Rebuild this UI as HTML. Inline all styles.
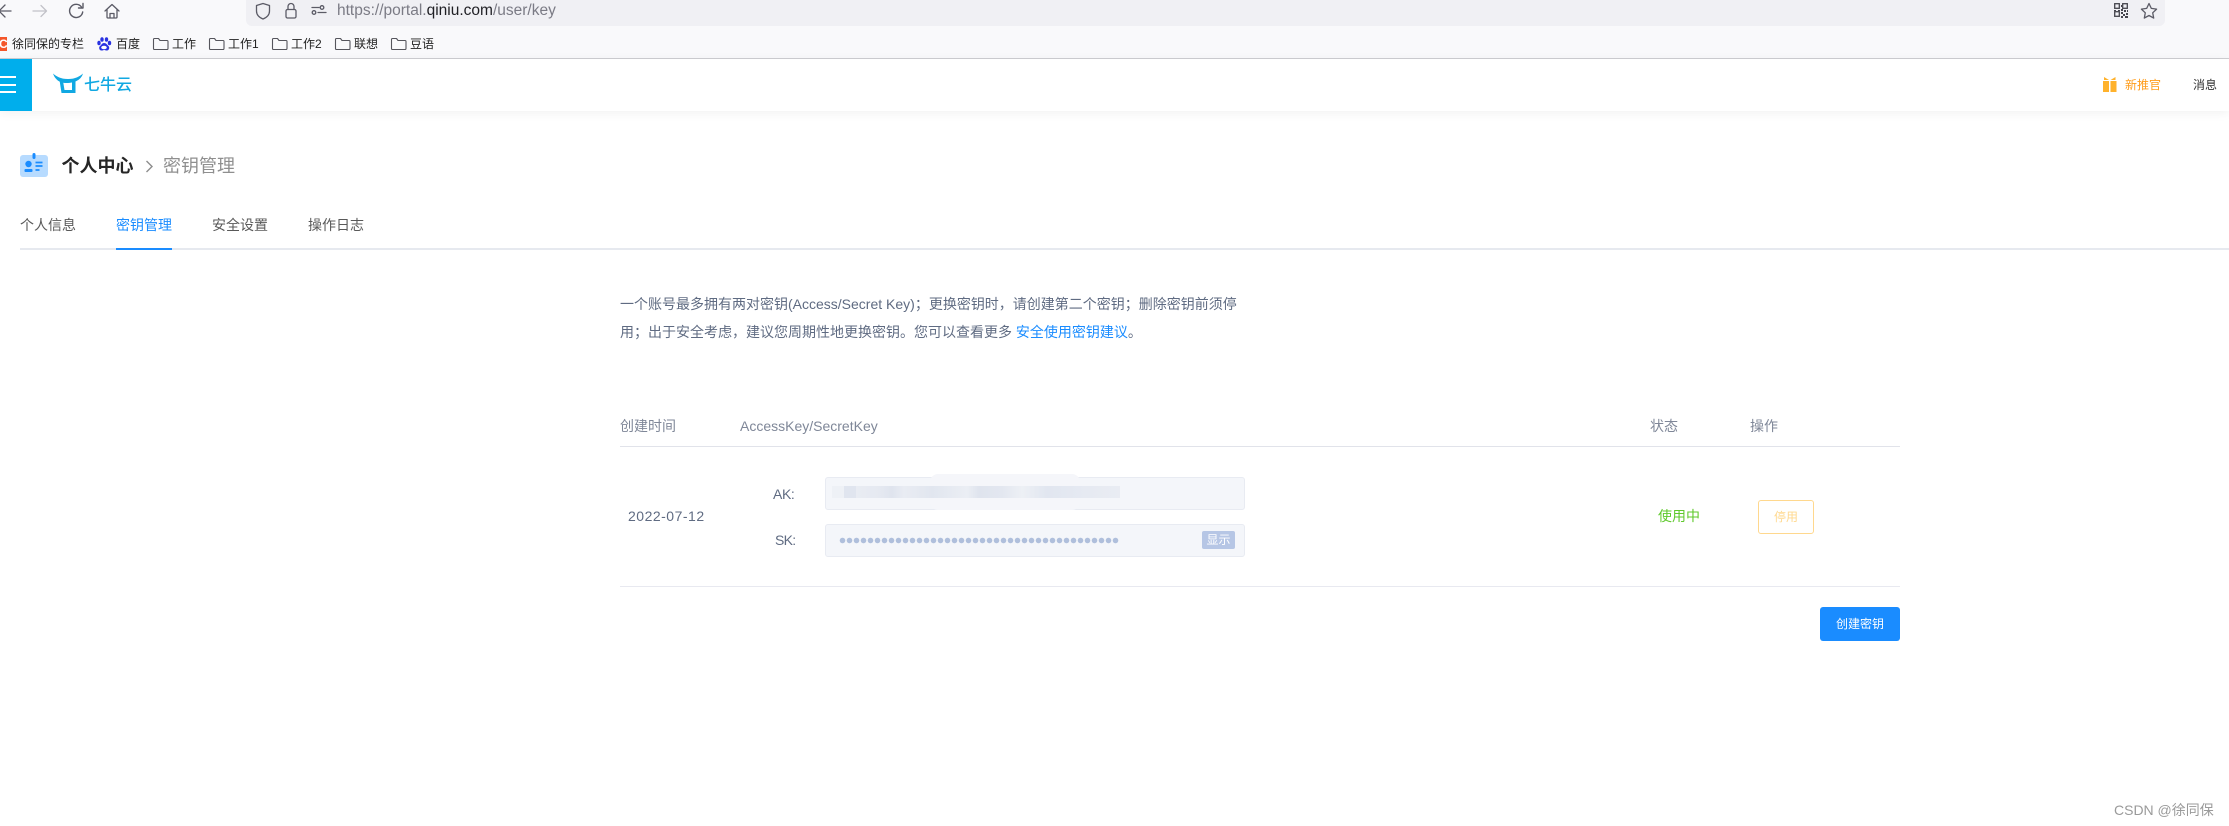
<!DOCTYPE html>
<html lang="zh">
<head>
<meta charset="utf-8">
<title>密钥管理</title>
<style>
html,body{margin:0;padding:0;background:#fff}
body{position:relative;width:2229px;height:826px;overflow:hidden;font-family:"Liberation Sans","Noto Sans CJK SC",sans-serif;color:#333}
.a{position:absolute;white-space:nowrap}
svg{position:absolute;overflow:visible}
.t{font-size:14px;line-height:20px;color:#5f6b82}
.bm{font-size:12px;line-height:16px;color:#222;top:36px}
</style>
</head>
<body>
<!-- browser chrome -->
<div class="a" style="left:0;top:0;width:2229px;height:58px;background:#f9f9fb;border-bottom:1px solid #cfcfd3"></div>
<div class="a" style="left:246px;top:0;width:1919px;height:26px;background:#f0f0f4;border-radius:0 0 6px 6px"></div>

<svg style="left:0;top:0" width="180" height="24" fill="none" stroke-linecap="round" stroke-linejoin="round">
  <path d="M11 11H-2M5 5l-6 6 6 6" stroke="#5b5b66" stroke-width="1.300"/>
  <path d="M33 11h13M41 5.500l5.500 5.500-5.500 5.500" stroke="#c2c2c8" stroke-width="1.300"/>
  <path d="M81.500 7a6.600 6.600 0 1 0 1.200 5" stroke="#5b5b66" stroke-width="1.400"/>
  <path d="M83 3.500v4.500h-4.500" stroke="#5b5b66" stroke-width="1.400"/>
  <path d="M105 11l7-6.500 7 6.500M107 9.500v7.500a1 1 0 0 0 1 1h8a1 1 0 0 0 1-1V9.500M110 18v-4.500h4V18" stroke="#5b5b66" stroke-width="1.300"/>
</svg>
<svg style="left:255px;top:0" width="75" height="24" fill="none" stroke="#5b5b66" stroke-width="1.300" stroke-linejoin="round" stroke-linecap="round">
  <path d="M8 3.500l6.500 2v5.500c0 3.800-2.800 6.500-6.500 8-3.700-1.500-6.500-4.200-6.500-8V5.500z"/>
  <rect x="31" y="9.500" width="10" height="8.500" rx="1.500"/>
  <path d="M33 9.500V6.500a3 3 0 0 1 6 0v3"/>
  <circle cx="59" cy="12.500" r="1.800"/><circle cx="67" cy="7.500" r="1.800"/>
  <path d="M57 7.500h7M63 12.500h8"/>
</svg>
<div class="a" style="left:337px;top:1px;font-size:15.500px;line-height:20px;color:#7b7b85">https://portal.<span style="color:#1f1f24">qiniu.com</span>/user/key</div>
<svg style="left:2112px;top:2px" width="50" height="20" fill="none">
  <g stroke="#45454d" stroke-width="1.300"><rect x="2.700" y="1.700" width="4.600" height="4.600"/><rect x="10.700" y="1.700" width="4.600" height="4.600"/><rect x="2.700" y="9.700" width="4.600" height="4.600"/></g>
  <path d="M2 8h2v1H2zM6 8h2v1H6zM9 3h1v2H9zM9 7h2v2H9zM12 8h2v2h-2zM15 8h1v2h-1zM9 10h2v2H9zM11 12h2v2h-2zM14 11h2v2h-2zM9 14h2v2H9zM13 14h3v2h-3z" fill="#45454d"/>
  <path d="M37 1.500l2.300 4.900 5.300.7-3.900 3.700 1 5.300-4.700-2.600-4.700 2.600 1-5.300-3.900-3.700 5.300-.7z" stroke="#5b5b66" stroke-width="1.300" stroke-linejoin="round"/>
</svg>

<!-- bookmarks -->
<div class="a" style="left:0;top:37px;width:7px;height:14px;background:#f4562a;overflow:hidden"><span class="a" style="left:-1px;top:0;color:#fff;font:bold 12px/14px 'Liberation Sans',sans-serif">C</span></div>
<div class="a bm" style="left:12px">徐同保的专栏</div>
<svg style="left:96px;top:36px" width="16" height="16" fill="#2932e1">
  <ellipse cx="3" cy="7" rx="1.700" ry="2.300"/><ellipse cx="6" cy="3.500" rx="1.700" ry="2.300"/><ellipse cx="10.500" cy="3.500" rx="1.700" ry="2.300"/><ellipse cx="13.500" cy="7" rx="1.700" ry="2.300"/>
  <path d="M8 7c-2 0-2.500 2-4 3s-1 4.500 1.500 4.500 1.500-.5 2.500-.5 1 .5 3 .5 3-3 1.500-4.500S10 7 8 7z"/>
  <ellipse cx="8" cy="11.500" rx="2.800" ry="1.800" fill="#fff"/>
</svg>
<div class="a bm" style="left:116px">百度</div>
<svg style="left:0;top:36px" width="420" height="16" fill="none" stroke="#55555c" stroke-width="1.100" stroke-linejoin="round">
  <path d="M153.500 3.500a1 1 0 0 1 1-1h4l1.500 2h7a1 1 0 0 1 1 1v7a1 1 0 0 1-1 1h-12.500a1 1 0 0 1-1-1z"/>
  <path d="M209.500 3.500a1 1 0 0 1 1-1h4l1.500 2h7a1 1 0 0 1 1 1v7a1 1 0 0 1-1 1h-12.500a1 1 0 0 1-1-1z"/>
  <path d="M272.500 3.500a1 1 0 0 1 1-1h4l1.500 2h7a1 1 0 0 1 1 1v7a1 1 0 0 1-1 1h-12.500a1 1 0 0 1-1-1z"/>
  <path d="M335.500 3.500a1 1 0 0 1 1-1h4l1.500 2h7a1 1 0 0 1 1 1v7a1 1 0 0 1-1 1h-12.500a1 1 0 0 1-1-1z"/>
  <path d="M391.500 3.500a1 1 0 0 1 1-1h4l1.500 2h7a1 1 0 0 1 1 1v7a1 1 0 0 1-1 1h-12.500a1 1 0 0 1-1-1z"/>
</svg>
<div class="a bm" style="left:172px">工作</div>
<div class="a bm" style="left:228px">工作1</div>
<div class="a bm" style="left:291px">工作2</div>
<div class="a bm" style="left:354px">联想</div>
<div class="a bm" style="left:410px">豆语</div>

<!-- top nav -->
<div class="a" style="left:0;top:59px;width:2229px;height:52px;background:#fff;box-shadow:0 2px 10px rgba(0,0,0,.06)"></div>
<div class="a" style="left:0;top:59px;width:32px;height:52px;background:#00aeec"></div>
<div class="a" style="left:0;top:76px;width:16px;height:2px;background:#fff"></div>
<div class="a" style="left:0;top:84px;width:16px;height:2px;background:#fff"></div>
<div class="a" style="left:0;top:91px;width:16px;height:2px;background:#fff"></div>
<svg style="left:50px;top:70px" width="40" height="28" fill="#11a8e2">
  <path d="M3 3.500c3.500 3 7.500 5.500 15 5.500s11.500-2.500 15-5.500c-1.500 5-6 9-15 9.500S5 9 3 3.500z"/>
  <path d="M9.500 10l3.500 1 1.500 9H22v-9l3.500-1.500V23H11.500z"/>
</svg>
<div class="a" style="left:84px;top:75px;font-size:16px;line-height:22px;font-weight:500;color:#11a8e2">七牛云</div>
<svg style="left:2103px;top:76px" width="14" height="17" fill="#ffb22c">
  <rect x="0" y="5" width="6" height="11"/><rect x="7.500" y="5" width="6" height="11"/>
  <path d="M1 1l5 3H1zM12.500 1l-5 3h5z"/>
</svg>
<div class="a" style="left:2125px;top:76px;font-size:12px;line-height:18px;color:#ff9c1a">新推官</div>
<div class="a" style="left:2193px;top:76px;font-size:12px;line-height:18px;color:#333">消息</div>

<!-- page title -->
<svg style="left:20px;top:152px" width="28" height="26">
  <rect x="0" y="3" width="28" height="22" rx="3" fill="#b7dbff"/>
  <rect x="12.500" y="1" width="3" height="6" rx="1.500" fill="#1a8cff"/>
  <circle cx="8.500" cy="12" r="3.200" fill="#1a8cff"/>
  <rect x="4.500" y="17" width="8" height="3" rx="1" fill="#1a8cff"/>
  <path d="M15.500 10.500h7M15.500 14h7M15.500 18h4" stroke="#1a8cff" stroke-width="1.700"/>
</svg>
<div class="a" style="left:61.500px;top:153px;font-size:18px;line-height:26px;font-weight:700;color:#262626">个人中心</div>
<svg style="left:143px;top:158px" width="12" height="16" fill="none"><path d="M3.500 3l5.500 5.500-5.500 5.500" stroke="#8c8c8c" stroke-width="1.400"/></svg>
<div class="a" style="left:163px;top:153px;font-size:18px;line-height:26px;color:#8f8f8f">密钥管理</div>

<!-- tabs -->
<div class="a t" style="left:20px;top:215px;color:#595959">个人信息</div>
<div class="a t" style="left:116px;top:215px;color:#1a8cff">密钥管理</div>
<div class="a t" style="left:212px;top:215px;color:#595959">安全设置</div>
<div class="a t" style="left:308px;top:215px;color:#595959">操作日志</div>
<div class="a" style="left:20px;top:248px;width:2209px;height:2px;background:#e6e9ef"></div>
<div class="a" style="left:116px;top:248px;width:56px;height:2px;background:#1a8cff"></div>

<!-- description -->
<div class="a t" style="left:620px;top:294px">一个账号最多拥有两对密钥(Access/Secret Key)；更换密钥时，请创建第二个密钥；删除密钥前须停</div>
<div class="a t" style="left:620px;top:322px">用；出于安全考虑，建议您周期性地更换密钥。您可以查看更多 <span style="color:#1a8cff">安全使用密钥建议</span>。</div>

<!-- table -->
<div class="a t" style="left:620px;top:416px;color:#7f8798">创建时间</div>
<div class="a t" style="left:740px;top:416px;color:#7f8798">AccessKey/SecretKey</div>
<div class="a t" style="left:1650px;top:416px;color:#7f8798">状态</div>
<div class="a t" style="left:1750px;top:416px;color:#7f8798">操作</div>
<div class="a" style="left:620px;top:446px;width:1280px;height:1px;background:#e1e3ea"></div>

<div class="a t" style="left:628px;top:506px;letter-spacing:.5px">2022-07-12</div>
<div class="a t" style="left:773px;top:484px;letter-spacing:-.4px">AK:</div>
<div class="a t" style="left:775px;top:530px;letter-spacing:-.7px">SK:</div>

<div class="a" style="left:825px;top:477px;width:418px;height:31px;background:#f4f6fa;border:1px solid #e8ebf2;border-radius:3px"></div>
<div class="a" style="left:825px;top:524px;width:418px;height:31px;background:#f4f6fa;border:1px solid #e8ebf2;border-radius:3px"></div>
<div class="a" style="left:930px;top:474px;width:150px;height:36px;background:#f5f6fa;border-radius:8px"></div>
<div class="a" style="left:832px;top:486px;width:288px;height:12px;background:linear-gradient(90deg,#eef1f6 0,#eef1f6 12px,#e0e5ef 12px,#e0e5ef 24px,#e9ecf3 24px,#e5e9f1 48px,#dfe4ee 60px,#e9ecf3 72px,#e1e6ef 100px,#ebeef4 135px,#dfe4ee 147px,#e3e7f0 170px,#edf0f5 190px,#e1e6f0 215px,#e6eaf2 255px,#e9ecf3 288px)"></div>
<div class="a" style="left:839px;top:537px;width:280px;height:7px;background:radial-gradient(circle at 3.500px 3.500px,#afbfdc 2.500px,rgba(175,191,220,0) 3px) 0 0/7px 7px repeat-x"></div>
<div class="a" style="left:1202px;top:531px;width:33px;height:18px;background:#b6c6e5;border-radius:2px;color:#fff;font-size:12px;line-height:18px;text-align:center">显示</div>

<div class="a" style="left:1658px;top:506px;font-size:14px;line-height:20px;color:#5fc92c">使用中</div>
<div class="a" style="left:1758px;top:500px;width:54px;height:32px;border:1px solid #ffd88e;border-radius:3px;color:#ffd88e;font-size:12px;line-height:32px;text-align:center">停用</div>
<div class="a" style="left:620px;top:586px;width:1280px;height:1px;background:#e8e9f0"></div>
<div class="a" style="left:1820px;top:607px;width:80px;height:34px;background:#1a8cff;border-radius:3px;color:#fff;font-size:12px;line-height:34px;text-align:center">创建密钥</div>

<!-- watermark -->
<div class="a" style="left:2114px;top:800px;font-size:14px;line-height:20px;color:#9a9a9a">CSDN @徐同保</div>
</body>
</html>
